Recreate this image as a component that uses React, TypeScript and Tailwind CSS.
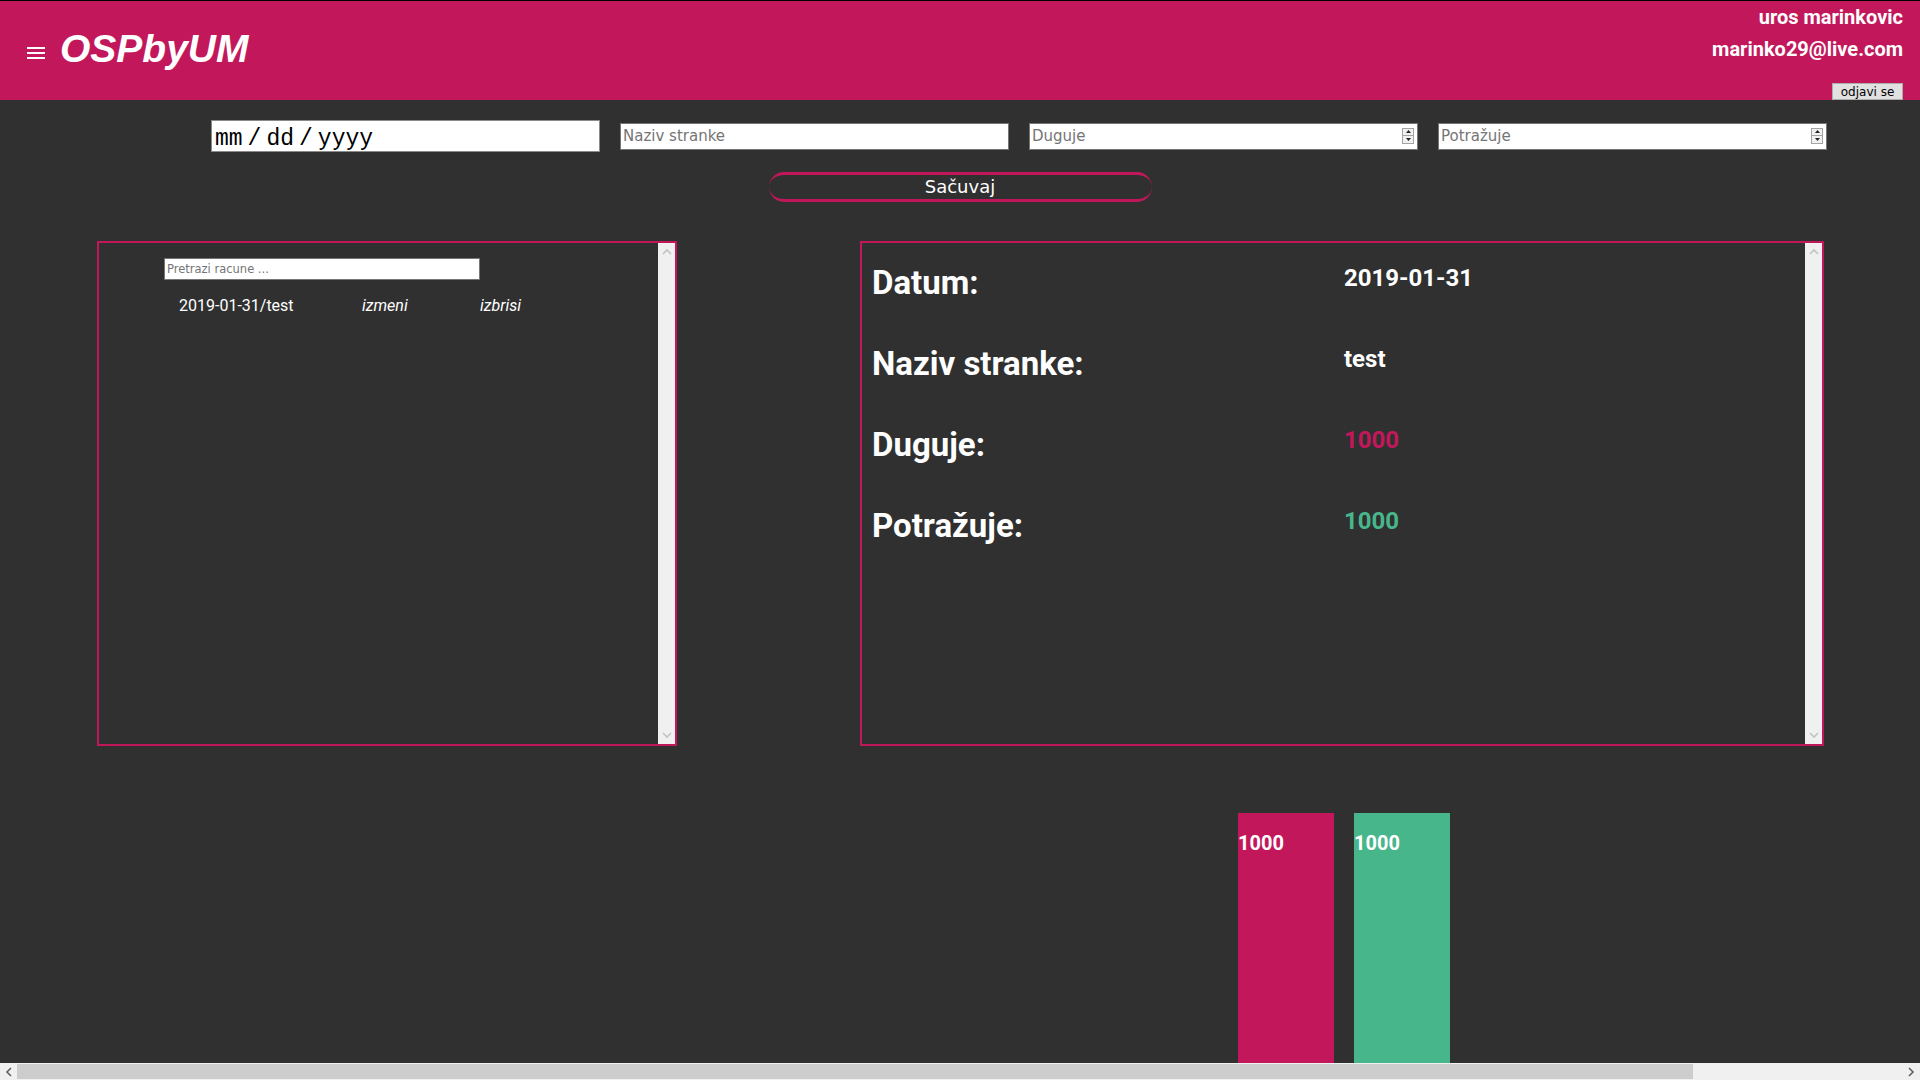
import React from "react";

function Chevron({ dir, color = "#c2c2c2" }: { dir: "up" | "down" | "left" | "right"; color?: string }) {
  const paths: Record<string, string> = {
    up: "M1 6 L5 2 L9 6",
    down: "M1 2 L5 6 L9 2",
    left: "M6 1 L2 5 L6 9",
    right: "M2 1 L6 5 L2 9",
  };
  const horizontal = dir === "up" || dir === "down";
  return (
    <svg
      width={horizontal ? 10 : 8}
      height={horizontal ? 8 : 10}
      viewBox={horizontal ? "0 0 10 8" : "0 0 8 10"}
      fill="none"
    >
      <path d={paths[dir]} stroke={color} strokeWidth="1.6" />
    </svg>
  );
}

function VScrollbar() {
  return (
    <div className="w-[17px] bg-[#f0f0f0] flex flex-col items-center justify-between py-[5px]">
      <Chevron dir="up" />
      <Chevron dir="down" />
    </div>
  );
}

function Spinner() {
  return (
    <div className="absolute right-[4px] top-[5px] w-[12px] h-[16px] border border-[#a3a3a3] bg-[#f0f0f0] flex flex-col">
      <div className="flex-1 flex items-center justify-center border-b border-[#a3a3a3]">
        <svg width="5" height="3" viewBox="0 0 5 3">
          <path d="M0 3 L2.5 0 L5 3 Z" fill="#222" />
        </svg>
      </div>
      <div className="flex-1 flex items-center justify-center">
        <svg width="5" height="3" viewBox="0 0 5 3">
          <path d="M0 0 L2.5 3 L5 0 Z" fill="#222" />
        </svg>
      </div>
    </div>
  );
}

function NumberField({ placeholder }: { placeholder: string }) {
  return (
    <div className="relative w-[389px] h-[27px]">
      <input
        type="text"
        placeholder={placeholder}
        className="w-full h-full bg-white border border-[#767676] pl-[2px] pr-[20px] text-[15px] text-black placeholder:text-[#757575] outline-none font-['DejaVu_Sans',sans-serif]"
      />
      <Spinner />
    </div>
  );
}

const details = [
  { label: "Datum:", value: "2019-01-31", color: "text-white" },
  { label: "Naziv stranke:", value: "test", color: "text-white" },
  { label: "Duguje:", value: "1000", color: "text-[#c2185b]" },
  { label: "Potražuje:", value: "1000", color: "text-[#48b68b]" },
];

export default function App() {
  return (
    <div className="h-screen w-full overflow-hidden flex flex-col bg-[#303030] font-['Roboto',sans-serif]">
      {/* header */}
      <header className="h-[100px] shrink-0 border-t border-black bg-[#c2185b] flex justify-between">
        <div className="flex items-start">
          <div className="ml-[27px] mt-[46px] flex flex-col gap-[3px]">
            <span className="block w-[18px] h-[2px] bg-white" />
            <span className="block w-[18px] h-[2px] bg-white" />
            <span className="block w-[18px] h-[2px] bg-white" />
          </div>
          <h1 className="ml-[15px] mt-[28px] text-[39px] leading-none font-bold italic text-white font-['Liberation_Sans',Arial,sans-serif]">
            OSPbyUM
          </h1>
        </div>
        <div className="pr-[17px] flex flex-col items-end">
          <div className="text-[20px] leading-[32px] font-bold text-white text-right">
            <div>uros marinkovic</div>
            <div>marinko29@live.com</div>
          </div>
          <button className="mt-[18px] w-[71px] h-[19px] bg-[#e1e1e1] border border-[#adadad] text-[12px] leading-none text-black font-['DejaVu_Sans',sans-serif]">
            odjavi se
          </button>
        </div>
      </header>

      {/* form */}
      <div className="mt-[20px] pl-[211px] flex items-center gap-[20px]">
        <div className="w-[389px] h-[32px] bg-white border border-[#8a8a8a] pl-[3px] pt-[6px] flex items-center gap-[5px] text-[23px] leading-none text-black font-['Liberation_Mono',monospace]">
          <span>mm</span>
          <span>/</span>
          <span>dd</span>
          <span>/</span>
          <span>yyyy</span>
        </div>
        <input
          type="text"
          placeholder="Naziv stranke"
          className="w-[389px] h-[27px] bg-white border border-[#767676] pl-[2px] text-[15px] placeholder:text-[#757575] outline-none font-['DejaVu_Sans',sans-serif]"
        />
        <NumberField placeholder="Duguje" />
        <NumberField placeholder="Potražuje" />
      </div>

      <button className="mt-[20px] mx-auto w-[383px] h-[30px] border-y-[3px] border-x-0 border-[#c2185b] rounded-[16px] text-[18px] leading-[24px] text-white font-['DejaVu_Sans',sans-serif]">
        Sačuvaj
      </button>

      {/* panels */}
      <div className="mt-[39px] pl-[97px] flex gap-[183px]">
        <div className="w-[580px] h-[505px] border-2 border-[#c2185b] flex">
          <div className="flex-1 pt-[13px]">
            <input
              type="text"
              placeholder="Pretrazi racune ..."
              className="ml-[65px] w-[316px] h-[22px] bg-white border border-[#767676] pl-[2px] text-[11.5px] placeholder:text-[#757575] outline-none font-['DejaVu_Sans',sans-serif]"
            />
            <div className="mt-[16px] ml-[80px] flex text-[16px] leading-[20px] text-white">
              <span className="w-[183px]">2019-01-31/test</span>
              <span className="w-[118px] italic">izmeni</span>
              <span className="italic">izbrisi</span>
            </div>
          </div>
          <VScrollbar />
        </div>

        <div className="w-[964px] h-[505px] border-2 border-[#c2185b] flex">
          <div className="flex-1 pt-[20px] pl-[10px]">
            {details.map((d) => (
              <div key={d.label} className="h-[81px] flex items-start">
                <div className="w-[472px] text-[33px] leading-[40px] font-bold text-white">{d.label}</div>
                <div className={`text-[24px] leading-[30px] font-bold ${d.color}`}>{d.value}</div>
              </div>
            ))}
          </div>
          <VScrollbar />
        </div>
      </div>

      {/* chart */}
      <div className="mt-[67px] flex-1 min-h-0 pl-[1238px] flex gap-[20px]">
        <div className="w-[96px] h-full bg-[#c2185b] pt-[18px] text-[20px] leading-[24px] font-bold text-white">1000</div>
        <div className="w-[96px] h-full bg-[#48b68b] pt-[18px] text-[20px] leading-[24px] font-bold text-white">1000</div>
      </div>

      {/* page scrollbar */}
      <div className="h-[17px] shrink-0 bg-[#f0f0f0] flex items-center">
        <div className="w-[17px] flex justify-center">
          <Chevron dir="left" color="#606060" />
        </div>
        <div className="w-[1676px] h-[15px] bg-[#cdcdcd]" />
        <div className="flex-1 flex justify-end pr-[5px]">
          <Chevron dir="right" color="#606060" />
        </div>
      </div>
    </div>
  );
}
